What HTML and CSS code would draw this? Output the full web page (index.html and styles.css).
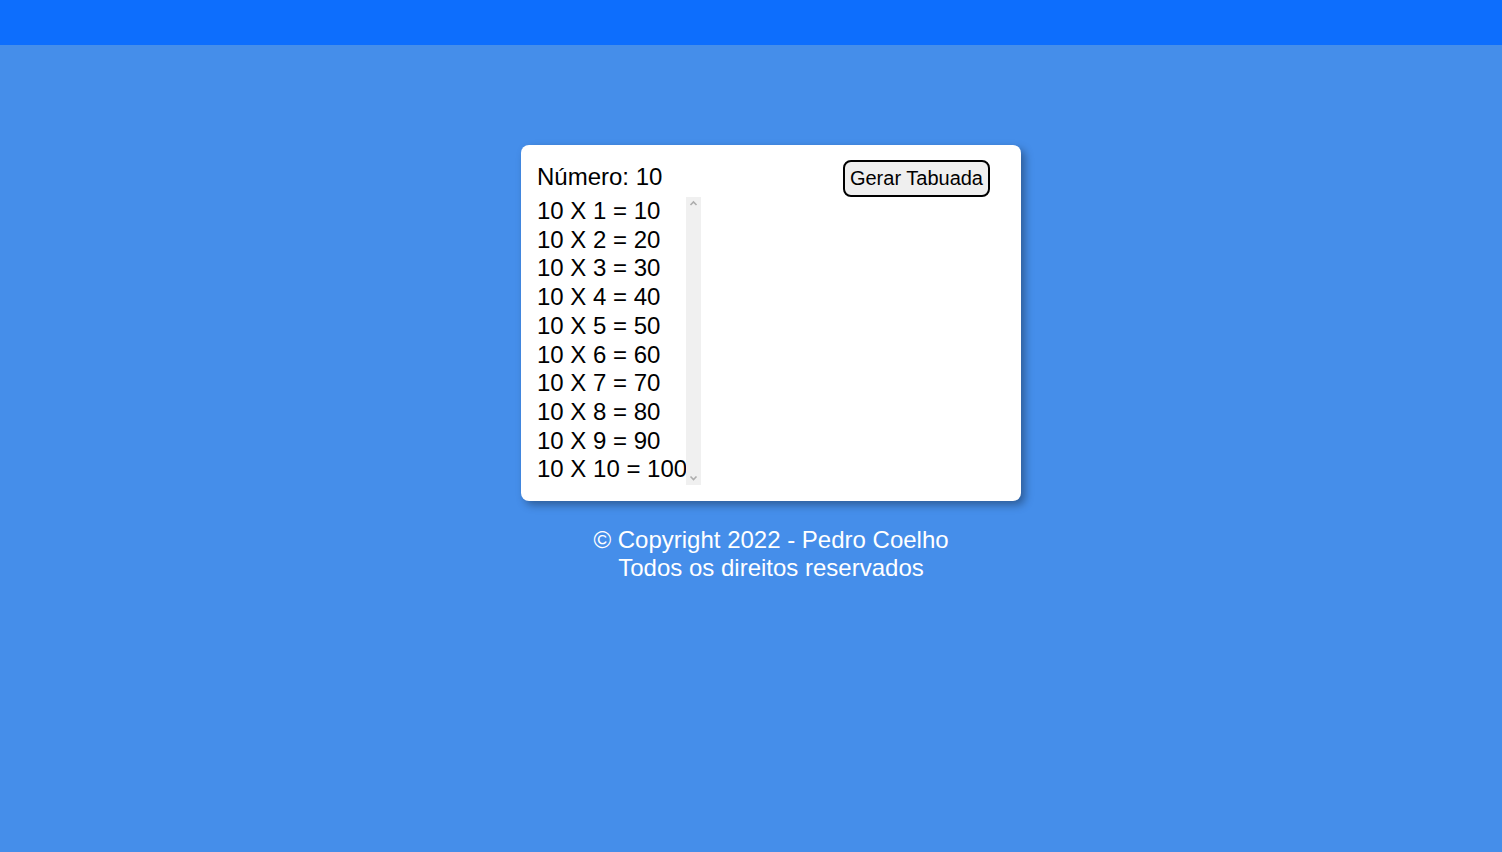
FILE: index.html
```html
<!DOCTYPE html>
<html lang="pt-BR">
<head>
<meta charset="utf-8">
<title>Tabuada</title>
<link rel="stylesheet" href="styles.css">
</head>
<body>
<header class="topbar"></header>
<main class="page">
  <section class="card">
    <div class="col-left">
      <div class="numero">Número: 10</div>
      <div class="lista-wrap">
        <div class="lista">
          <div>10 X 1 = 10</div>
          <div>10 X 2 = 20</div>
          <div>10 X 3 = 30</div>
          <div>10 X 4 = 40</div>
          <div>10 X 5 = 50</div>
          <div>10 X 6 = 60</div>
          <div>10 X 7 = 70</div>
          <div>10 X 8 = 80</div>
          <div>10 X 9 = 90</div>
          <div>10 X 10 = 100</div>
        </div>
        <div class="scrollbar" aria-hidden="true">
          <svg width="15" height="10" viewBox="0 0 15 10"><path d="M4.5 7 L7.5 4 L10.5 7" fill="none" stroke="#adadad" stroke-width="1.6"/></svg>
          <svg width="15" height="10" viewBox="0 0 15 10"><path d="M4.5 3.5 L7.5 6.5 L10.5 3.5" fill="none" stroke="#adadad" stroke-width="1.6"/></svg>
        </div>
      </div>
    </div>
    <button class="btn">Gerar Tabuada</button>
  </section>
  <footer class="rodape">
    <div>© Copyright 2022 - Pedro Coelho</div>
    <div>Todos os direitos reservados</div>
  </footer>
</main>
</body>
</html>
```
FILE: styles.css
```css
html, body {
  margin: 0;
  padding: 0;
}
body {
  background: #458eea;
  font-family: "Liberation Sans", Arial, sans-serif;
  min-height: 852px;
}
.topbar {
  height: 45px;
  background: #0d6efd;
}
.page {
  display: flex;
  flex-direction: column;
  align-items: center;
  padding-top: 100px;
  padding-left: 40px;
}
.card {
  width: 500px;
  box-sizing: border-box;
  background: #fff;
  border-radius: 8px;
  box-shadow: 4px 4px 8px rgba(0, 0, 0, 0.35);
  padding: 17px 16px 16px;
  display: flex;
  justify-content: space-between;
  align-items: flex-start;
}
.col-left {
  display: flex;
  flex-direction: column;
  gap: 7px;
}
.numero {
  font-size: 24px;
  line-height: 29px;
  color: #000;
}
.lista-wrap {
  display: flex;
  height: 288px;
  margin-top: -1px;
}
.lista {
  font-size: 24px;
  line-height: 28.7px;
  color: #000;
  white-space: nowrap;
  margin-right: -1px;
}
.scrollbar {
  width: 15px;
  background: #f0f0f0;
  display: flex;
  flex-direction: column;
  justify-content: space-between;
  padding: 1px 0 2px;
}
.scrollbar svg {
  display: block;
}
.btn {
  margin-right: 15px;
  margin-top: -2px;
  font-family: "Liberation Sans", Arial, sans-serif;
  font-size: 20px;
  line-height: 23px;
  padding: 5px 5px;
  background: #efefef;
  color: #000;
  border: 2px solid #000;
  border-radius: 8px;
}
.rodape {
  margin-top: 25px;
  color: #fff;
  font-size: 24px;
  line-height: 28px;
  text-align: center;
}
```
